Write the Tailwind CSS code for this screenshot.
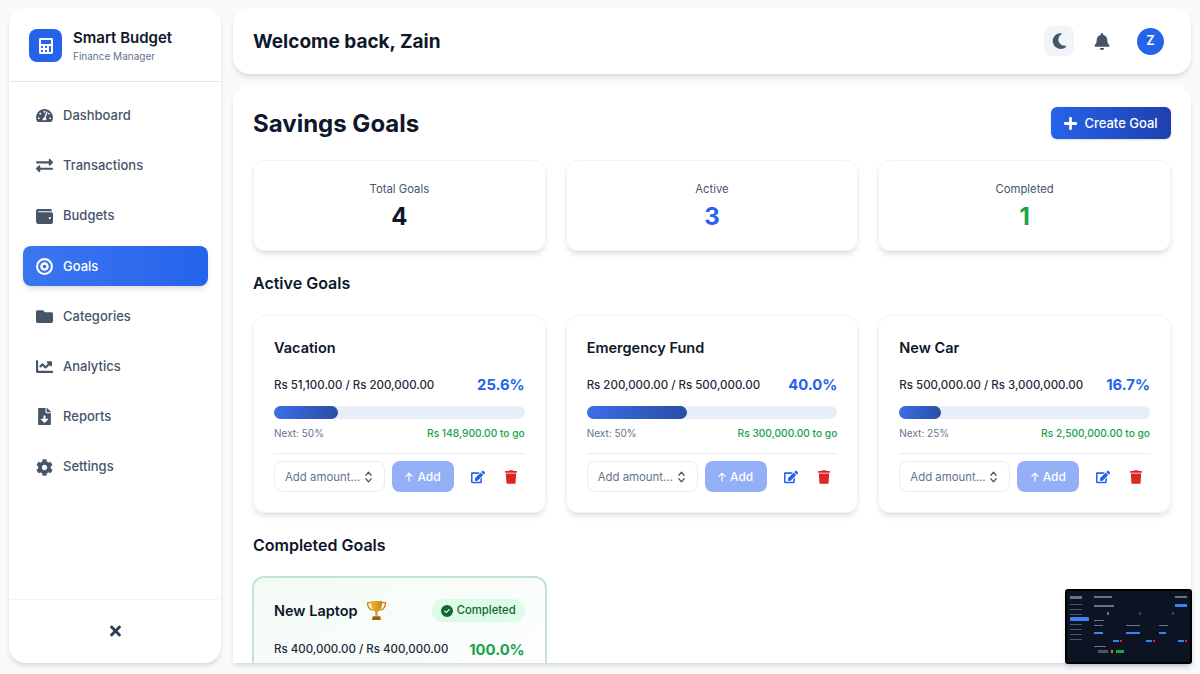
<!DOCTYPE html>
<html lang="en">
    <head>
        <meta charset="UTF-8" />
        <meta name="viewport" content="width=device-width, initial-scale=1.0" />
        <title>Smart Budget</title>
        <script src="https://cdn.jsdelivr.net/npm/@tailwindcss/browser@4"></script>
    </head>

    <body class="relative h-[674px] overflow-hidden bg-[#f8fafc] font-['Inter',sans-serif] text-[#0f172a]">
        <svg class="hidden">
            <symbol id="i-arrow-up" viewBox="0 0 384 512"><path d="M214.6 41.4c-12.5-12.5-32.8-12.5-45.3 0l-160 160c-12.5 12.5-12.5 32.8 0 45.3s32.8 12.5 45.3 0L160 141.2V448c0 17.7 14.3 32 32 32s32-14.3 32-32V141.2L329.4 246.6c12.5 12.5 32.8 12.5 45.3 0s12.5-32.8 0-45.3l-160-160z" /></symbol>
            <symbol id="i-edit" viewBox="0 0 576 512"><path d="M402.6 83.2l90.2 90.2c3.8 3.8 3.8 10 0 13.8L274.4 405.6l-92.8 10.3c-12.4 1.4-22.9-9.1-21.5-21.5l10.3-92.8L388.8 83.2c3.8-3.8 10-3.8 13.8 0zm162-22.9l-48.8-48.8c-15.2-15.2-39.9-15.2-55.2 0l-35.4 35.4c-3.8 3.8-3.8 10 0 13.8l90.2 90.2c3.8 3.8 10 3.8 13.8 0l35.4-35.4c15.2-15.3 15.2-40 0-55.2zM384 346.2V448H64V128h229.8c3.2 0 6.2-1.3 8.5-3.5l40-40c7.6-7.6 2.2-20.5-8.5-20.5H48C21.5 64 0 85.5 0 112v352c0 26.5 21.5 48 48 48h352c26.5 0 48-21.5 48-48V306.2c0-10.7-12.9-16-20.5-8.5l-40 40c-2.2 2.3-3.5 5.3-3.5 8.5z" /></symbol>
            <symbol id="i-trash" viewBox="0 0 448 512"><path d="M432 32H312l-9.4-18.7A24 24 0 0 0 281.1 0H166.8a23.72 23.72 0 0 0-21.4 13.3L136 32H16A16 16 0 0 0 0 48v32a16 16 0 0 0 16 16h416a16 16 0 0 0 16-16V48a16 16 0 0 0-16-16zM53.2 467a48 48 0 0 0 47.9 45h245.8a48 48 0 0 0 47.9-45L416 128H32z" /></symbol>
            <symbol id="i-spin" viewBox="0 0 10 16"><path d="M2 6l3-3.5L8 6M2 10l3 3.5L8 10" fill="none" stroke="currentColor" stroke-width="1.4" stroke-linecap="round" stroke-linejoin="round" /></symbol>
        </svg>

        <div class="flex h-[663px] gap-3 pt-2 pl-[9px] pr-[9px]">
            <!-- sidebar -->
            <aside class="flex h-[655px] w-[212px] shrink-0 flex-col rounded-2xl border border-white bg-white shadow-md">
                <div class="flex h-[73px] items-center gap-[11px] border-b border-[#e2e8f0] pl-[19px] pt-px">
                    <div class="flex h-[33px] w-[33px] items-center justify-center rounded-lg bg-[#2563eb] text-white">
                        <svg class="h-4 w-3.5 fill-current" viewBox="0 0 448 512"><path d="M400 0H48C22.4 0 0 22.4 0 48v416c0 25.6 22.4 48 48 48h352c25.6 0 48-22.4 48-48V48c0-25.6-22.4-48-48-48zM128 435.2c0 6.4-6.4 12.8-12.8 12.8H76.8c-6.4 0-12.8-6.4-12.8-12.8v-38.4c0-6.4 6.4-12.8 12.8-12.8h38.4c6.4 0 12.8 6.4 12.8 12.8v38.4zm0-128c0 6.4-6.4 12.8-12.8 12.8H76.8c-6.4 0-12.8-6.4-12.8-12.8v-38.4c0-6.4 6.4-12.8 12.8-12.8h38.4c6.4 0 12.8 6.4 12.8 12.8v38.4zm128 128c0 6.4-6.4 12.8-12.8 12.8h-38.4c-6.4 0-12.8-6.4-12.8-12.8v-38.4c0-6.4 6.4-12.8 12.8-12.8h38.4c6.4 0 12.8 6.4 12.8 12.8v38.4zm0-128c0 6.4-6.4 12.8-12.8 12.8h-38.4c-6.4 0-12.8-6.4-12.8-12.8v-38.4c0-6.4 6.4-12.8 12.8-12.8h38.4c6.4 0 12.8 6.4 12.8 12.8v38.4zm128 128c0 6.4-6.4 12.8-12.8 12.8h-38.4c-6.4 0-12.8-6.4-12.8-12.8V268.8c0-6.4 6.4-12.8 12.8-12.8h38.4c6.4 0 12.8 6.4 12.8 12.8v166.4zm0-256c0 6.4-6.4 12.8-12.8 12.8H76.8c-6.4 0-12.8-6.4-12.8-12.8V76.8C64 70.4 70.4 64 76.8 64h294.4c6.4 0 12.8 6.4 12.8 12.8v102.4z" /></svg>
                    </div>
                    <div>
                        <div class="text-[15px] leading-5 font-semibold">Smart Budget</div>
                        <div class="mt-px text-[10px] leading-[14px] text-[#64748b]">Finance Manager</div>
                    </div>
                </div>

                <nav class="flex flex-1 flex-col gap-[10.2px] pt-[13.8px] pr-3 pl-[13px] text-[13px] font-medium text-[#475569]">
                    <a class="flex h-10 items-center gap-[10px] pl-[13px]">
                        <svg class="h-[15px] w-[17px] fill-current" viewBox="0 0 576 512"><path d="M288 32C128.94 32 0 160.94 0 320c0 52.8 14.25 102.26 39.06 144.8 5.61 9.62 16.3 15.2 27.44 15.2h443c11.14 0 21.83-5.58 27.44-15.2C561.75 422.26 576 372.8 576 320c0-159.06-128.94-288-288-288zm0 64c14.71 0 26.58 10.13 30.32 23.65-1.11 2.26-2.64 4.23-3.45 6.67l-9.22 27.67c-5.13 3.49-10.97 6.01-17.64 6.01-17.67 0-32-14.33-32-32S270.33 96 288 96zM96 384c-17.67 0-32-14.33-32-32s14.33-32 32-32 32 14.33 32 32-14.33 32-32 32zm48-160c-17.67 0-32-14.33-32-32s14.33-32 32-32 32 14.33 32 32-14.33 32-32 32zm246.77-72.41l-61.33 184C343.13 347.33 352 364.54 352 384c0 11.72-3.38 22.55-8.88 32H232.88c-5.5-9.45-8.88-20.28-8.88-32 0-33.94 26.5-61.43 59.9-63.59l61.34-184.01c4.17-12.56 17.73-19.45 30.36-15.17 12.57 4.19 19.35 17.79 15.17 30.36zm14.66 57.2l15.52-46.55c3.47-1.29 7.13-2.23 11.05-2.23 17.67 0 32 14.33 32 32s-14.33 32-32 32c-11.38-.01-20.89-6.28-26.57-15.22zM480 384c-17.67 0-32-14.33-32-32s14.33-32 32-32 32 14.33 32 32-14.33 32-32 32z" /></svg>
                        Dashboard
                    </a>
                    <a class="flex h-10 items-center gap-[10px] pl-[13px]">
                        <svg class="h-[17px] w-[17px] fill-current" viewBox="0 0 512 512"><path d="M0 168v-16c0-13.255 10.745-24 24-24h360V80c0-21.367 25.899-32.042 40.971-16.971l80 80c9.372 9.373 9.372 24.569 0 33.941l-80 80C409.956 272.982 384 262.456 384 240v-48H24c-13.255 0-24-10.745-24-24zm488 152H128v-48c0-21.314-25.862-32.08-40.971-16.971l-80 80c-9.372 9.373-9.372 24.569 0 33.941l80 80C102.057 463.997 128 453.437 128 432v-48h360c13.255 0 24-10.745 24-24v-16c0-13.255-10.745-24-24-24z" /></svg>
                        Transactions
                    </a>
                    <a class="flex h-10 items-center gap-[10px] pl-[13px]">
                        <svg class="h-[17px] w-[17px] fill-current" viewBox="0 0 512 512"><path d="M461.2 128H80c-8.84 0-16-7.16-16-16s7.16-16 16-16h384c8.84 0 16-7.16 16-16 0-26.51-21.49-48-48-48H64C28.65 32 0 60.65 0 96v320c0 35.35 28.65 64 64 64h397.2c28.02 0 50.8-21.53 50.8-48V176c0-26.47-22.78-48-50.8-48zM416 336c-17.67 0-32-14.33-32-32s14.33-32 32-32 32 14.33 32 32-14.33 32-32 32z" /></svg>
                        Budgets
                    </a>
                    <a class="flex h-10 items-center gap-[10px] rounded-lg bg-linear-to-r from-[#3b76f0] to-[#2563eb] pl-[13px] text-white shadow-md">
                        <svg class="h-[17px] w-[17px] fill-current" viewBox="0 0 512 512"><path fill-rule="evenodd" d="M256 0a256 256 0 1 1 0 512A256 256 0 1 1 256 0zm0 64a192 192 0 1 0 0 384 192 192 0 1 0 0-384zm0 64a128 128 0 1 1 0 256 128 128 0 1 1 0-256zm0 72a56 56 0 1 0 0 112 56 56 0 1 0 0-112z" /></svg>
                        Goals
                    </a>
                    <a class="flex h-10 items-center gap-[10px] pl-[13px]">
                        <svg class="h-[17px] w-[17px] fill-current" viewBox="0 0 512 512"><path d="M464 128H272l-64-64H48C21.49 64 0 85.49 0 112v288c0 26.51 21.49 48 48 48h416c26.51 0 48-21.49 48-48V176c0-26.51-21.49-48-48-48z" /></svg>
                        Categories
                    </a>
                    <a class="flex h-10 items-center gap-[10px] pl-[13px]">
                        <svg class="h-[17px] w-[17px] fill-current" viewBox="0 0 512 512"><path d="M496 384H64V80c0-8.84-7.16-16-16-16H16C7.16 64 0 71.16 0 80v336c0 17.67 14.33 32 32 32h464c8.84 0 16-7.16 16-16v-32c0-8.84-7.16-16-16-16zM464 96H345.94c-21.38 0-32.09 25.85-16.97 40.97l32.4 32.4L288 242.75l-73.37-73.37c-12.5-12.5-32.76-12.5-45.25 0l-68.69 68.69c-6.25 6.25-6.25 16.38 0 22.63l22.62 22.62c6.25 6.25 16.38 6.25 22.63 0L192 237.25l73.37 73.37c12.5 12.5 32.76 12.5 45.25 0l96-96 32.4 32.4c15.12 15.12 40.97 4.41 40.97-16.97V112c.01-8.84-7.15-16-15.99-16z" /></svg>
                        Analytics
                    </a>
                    <a class="flex h-10 items-center gap-[10px] pl-[13px]">
                        <svg class="h-[17px] w-[17px] fill-current" viewBox="0 0 384 512"><path d="M224 136V0H24C10.7 0 0 10.7 0 24v464c0 13.3 10.7 24 24 24h336c13.3 0 24-10.7 24-24V160H248c-13.2 0-24-10.8-24-24zm76.45 211.36l-96.42 95.7c-6.65 6.61-17.39 6.61-24.04 0l-96.42-95.7C73.42 337.29 80.54 320 94.82 320H160v-80c0-8.84 7.16-16 16-16h32c8.84 0 16 7.16 16 16v80h65.18c14.28 0 21.4 17.29 11.27 27.36zM377 105L279.1 7c-4.5-4.5-10.6-7-17-7H256v128h128v-6.1c0-6.3-2.5-12.4-7-16.9z" /></svg>
                        Reports
                    </a>
                    <a class="flex h-10 items-center gap-[10px] pl-[13px]">
                        <svg class="h-[17px] w-[17px] fill-current" viewBox="0 0 512 512"><path d="M487.4 315.7l-42.6-24.6c4.3-23.2 4.3-47 0-70.2l42.6-24.6c4.9-2.8 7.1-8.6 5.5-14-11.1-35.6-30-67.8-54.7-94.6-3.8-4.1-10-5.1-14.8-2.3L380.8 110c-17.9-15.4-38.5-27.3-60.8-35.1V25.8c0-5.6-3.9-10.5-9.4-11.7-36.7-8.2-74.3-7.8-109.2 0-5.5 1.2-9.4 6.1-9.4 11.7V75c-22.2 7.9-42.8 19.8-60.8 35.1L88.7 85.5c-4.9-2.8-11-1.9-14.8 2.3-24.7 26.7-43.6 58.9-54.7 94.6-1.7 5.4.6 11.2 5.5 14L67.3 221c-4.3 23.2-4.3 47 0 70.2l-42.6 24.6c-4.9 2.8-7.1 8.6-5.5 14 11.1 35.6 30 67.8 54.7 94.6 3.8 4.1 10 5.1 14.8 2.3l42.6-24.6c17.9 15.4 38.5 27.3 60.8 35.1v49.2c0 5.6 3.9 10.5 9.4 11.7 36.7 8.2 74.3 7.8 109.2 0 5.5-1.2 9.4-6.1 9.4-11.7v-49.2c22.2-7.9 42.8-19.8 60.8-35.1l42.6 24.6c4.9 2.8 11 1.9 14.8-2.3 24.7-26.7 43.6-58.9 54.7-94.6 1.5-5.5-.7-11.3-5.6-14.1zM256 336c-44.1 0-80-35.9-80-80s35.9-80 80-80 80 35.9 80 80-35.9 80-80 80z" /></svg>
                        Settings
                    </a>
                </nav>

                <div class="flex h-[63px] items-center justify-center border-t border-[#f1f5f9] text-[#334155]">
                    <svg class="h-4 w-[11px] fill-current" viewBox="0 0 352 512"><path d="M242.72 256l100.07-100.07c12.28-12.28 12.28-32.19 0-44.48l-22.24-22.24c-12.28-12.28-32.19-12.28-44.48 0L176 189.28 75.93 89.21c-12.28-12.28-32.19-12.28-44.48 0L9.21 111.45c-12.28 12.28-12.28 32.19 0 44.48L109.28 256 9.21 356.07c-12.28 12.28-12.28 32.19 0 44.48l22.24 22.24c12.28 12.28 32.2 12.28 44.48 0L176 322.72l100.07 100.07c12.28 12.28 32.2 12.28 44.48 0l22.24-22.24c12.28-12.28 12.28-32.19 0-44.48L242.72 256z" /></svg>
                </div>
            </aside>

            <div class="flex min-w-0 flex-1 flex-col gap-3">
                <!-- header -->
                <header class="flex h-[66px] shrink-0 items-center justify-between rounded-2xl border border-white bg-white pr-[26px] pl-[19px] shadow-md">
                    <h1 class="pt-0.5 text-[19px] font-bold">Welcome back, Zain</h1>
                    <div class="flex items-center text-[#475569]">
                        <button class="flex h-[30px] w-[30px] items-center justify-center rounded-lg bg-[#f1f5f9]">
                            <svg class="h-[18px] w-[15px] fill-current" viewBox="0 0 384 512"><path d="M223.5 32C100 32 0 132.3 0 256S100 480 223.5 480c60.6 0 115.5-24.2 155.8-63.4c5-4.9 6.3-12.5 3.1-18.7s-10.1-9.7-17-8.5c-9.8 1.7-19.8 2.6-30.1 2.6c-96.9 0-175.5-78.8-175.5-176c0-65.8 36-123.1 89.3-153.3c6.1-3.5 9.2-10.5 7.7-17.3s-7.3-11.9-14.3-12.5c-6.3-.5-12.6-.8-19-.8z" /></svg>
                        </button>
                        <svg class="ml-5 h-[17px] w-[16px] fill-current" viewBox="0 0 448 512"><path d="M224 0c-17.7 0-32 14.3-32 32V51.2C119 66 64 130.6 64 208v18.8c0 47-17.3 92.4-48.5 127.6l-7.4 8.3c-8.4 9.4-10.4 22.9-5.3 34.4S19.4 416 32 416H416c12.6 0 24-7.4 29.2-18.9s3.1-25-5.3-34.4l-7.4-8.3C401.3 319.2 384 273.9 384 226.8V208c0-77.4-55-142-128-156.8V32c0-17.7-14.3-32-32-32zm45.3 493.3c12-12 18.7-28.3 18.7-45.3H224 160c0 17 6.7 33.3 18.7 45.3s28.3 18.7 45.3 18.7s33.3-6.7 45.3-18.7z" /></svg>
                        <div class="ml-[27px] flex h-[27px] w-[27px] items-center justify-center rounded-full bg-[#2563eb] text-[13px] font-semibold text-white">Z</div>
                    </div>
                </header>

                <!-- main -->
                <main class="min-h-0 flex-1 overflow-hidden rounded-t-2xl border border-b-0 border-white bg-white px-[19px] pt-5 shadow-md">
                    <div class="flex h-8 items-center justify-between">
                        <h2 class="pt-0.5 text-[24px] font-bold">Savings Goals</h2>
                        <button class="flex h-8 w-[120px] items-center justify-center gap-[7px] rounded-md bg-linear-to-r from-[#2563eb] to-[#1e40af] pt-px text-[13px] font-medium text-white shadow-sm">
                            <svg class="h-[15px] w-[13px] fill-current" viewBox="0 0 448 512"><path d="M416 208H272V64c0-17.67-14.33-32-32-32h-32c-17.67 0-32 14.33-32 32v144H32c-17.67 0-32 14.33-32 32v32c0 17.67 14.33 32 32 32h144v144c0 17.67 14.33 32 32 32h32c17.67 0 32-14.33 32-32V304h144c17.67 0 32-14.33 32-32v-32c0-17.67-14.33-32-32-32z" /></svg>
                            Create Goal
                        </button>
                    </div>

                    <div class="mt-[21px] grid grid-cols-3 gap-5">
                        <div class="flex h-[91px] flex-col items-center rounded-xl border border-[#f1f5f9] pt-5 shadow-md">
                            <div class="text-[11.3px] leading-4 text-[#475569]">Total Goals</div>
                            <div class="mt-1.5 text-2xl leading-7 font-bold">4</div>
                        </div>
                        <div class="flex h-[91px] flex-col items-center rounded-xl border border-[#f1f5f9] pt-5 shadow-md">
                            <div class="text-[11.3px] leading-4 text-[#475569]">Active</div>
                            <div class="mt-1.5 text-2xl leading-7 font-bold text-[#2563eb]">3</div>
                        </div>
                        <div class="flex h-[91px] flex-col items-center rounded-xl border border-[#f1f5f9] pt-5 shadow-md">
                            <div class="text-[11.3px] leading-4 text-[#475569]">Completed</div>
                            <div class="mt-1.5 text-2xl leading-7 font-bold text-[#16a34a]">1</div>
                        </div>
                    </div>

                    <h3 class="mt-[19px] mb-[19px] text-[16px] leading-[26px] font-semibold">Active Goals</h3>

                    <div class="grid grid-cols-3 gap-5">
                        <div class="h-[198px] rounded-xl border border-[#f1f5f9] px-5 pt-[22px] shadow-md">
                            <div class="text-[14.5px] leading-5 font-semibold">Vacation</div>
                            <div class="mt-[17px] flex items-center justify-between">
                                <span class="pt-0.5 text-[11.5px] font-medium text-[#1e293b]">Rs 51,100.00 / Rs 200,000.00</span>
                                <span class="text-[14.8px] leading-5 font-bold text-[#2563eb]">25.6%</span>
                            </div>
                            <div class="mt-[11px] h-[13px] rounded-full bg-[#e8eef7]">
                                <div class="h-full rounded-full bg-linear-to-r from-[#3b6ee6] to-[#2a4ea6]" style="width: 25.6%"></div>
                            </div>
                            <div class="mt-2 flex justify-between text-[10px] leading-[13px]">
                                <span class="text-[#64748b]">Next: 50%</span>
                                <span class="text-[10.2px] font-medium text-[#16a34a]">Rs 148,900.00 to go</span>
                            </div>
                            <div class="mt-[13px] flex items-center border-t border-[#e8ecf1] pt-[7px]">
                                <div class="flex h-[31px] w-[111px] items-center justify-between rounded-lg border border-[#e8ecf1] pr-[11px] pl-2.5 text-[11.4px] whitespace-nowrap text-[#64748b]">
                                    <span class="pt-0.5">Add amount...</span>
                                    <svg class="h-3.5 w-[9px] text-[#475569]"><use href="#i-spin" /></svg>
                                </div>
                                <button class="ml-[7px] flex h-[31px] w-[62px] items-center justify-center gap-1 rounded-lg bg-[#93aff5] text-xs font-medium text-white">
                                    <svg class="h-2.5 w-2 fill-current"><use href="#i-arrow-up" /></svg>
                                    Add
                                </button>
                                <svg class="ml-[17px] h-[14px] w-[14px] fill-[#2563eb]"><use href="#i-edit" /></svg>
                                <svg class="ml-[20px] h-[14px] w-[12px] fill-[#dc2626]"><use href="#i-trash" /></svg>
                            </div>
                        </div>

                        <div class="h-[198px] rounded-xl border border-[#f1f5f9] px-5 pt-[22px] shadow-md">
                            <div class="text-[14.5px] leading-5 font-semibold">Emergency Fund</div>
                            <div class="mt-[17px] flex items-center justify-between">
                                <span class="pt-0.5 text-[11.5px] font-medium text-[#1e293b]">Rs 200,000.00 / Rs 500,000.00</span>
                                <span class="text-[14.8px] leading-5 font-bold text-[#2563eb]">40.0%</span>
                            </div>
                            <div class="mt-[11px] h-[13px] rounded-full bg-[#e8eef7]">
                                <div class="h-full rounded-full bg-linear-to-r from-[#3b6ee6] to-[#2a4ea6]" style="width: 40%"></div>
                            </div>
                            <div class="mt-2 flex justify-between text-[10px] leading-[13px]">
                                <span class="text-[#64748b]">Next: 50%</span>
                                <span class="text-[10.2px] font-medium text-[#16a34a]">Rs 300,000.00 to go</span>
                            </div>
                            <div class="mt-[13px] flex items-center border-t border-[#e8ecf1] pt-[7px]">
                                <div class="flex h-[31px] w-[111px] items-center justify-between rounded-lg border border-[#e8ecf1] pr-[11px] pl-2.5 text-[11.4px] whitespace-nowrap text-[#64748b]">
                                    <span class="pt-0.5">Add amount...</span>
                                    <svg class="h-3.5 w-[9px] text-[#475569]"><use href="#i-spin" /></svg>
                                </div>
                                <button class="ml-[7px] flex h-[31px] w-[62px] items-center justify-center gap-1 rounded-lg bg-[#93aff5] text-xs font-medium text-white">
                                    <svg class="h-2.5 w-2 fill-current"><use href="#i-arrow-up" /></svg>
                                    Add
                                </button>
                                <svg class="ml-[17px] h-[14px] w-[14px] fill-[#2563eb]"><use href="#i-edit" /></svg>
                                <svg class="ml-[20px] h-[14px] w-[12px] fill-[#dc2626]"><use href="#i-trash" /></svg>
                            </div>
                        </div>

                        <div class="h-[198px] rounded-xl border border-[#f1f5f9] px-5 pt-[22px] shadow-md">
                            <div class="text-[14.5px] leading-5 font-semibold">New Car</div>
                            <div class="mt-[17px] flex items-center justify-between">
                                <span class="pt-0.5 text-[11.5px] font-medium text-[#1e293b]">Rs 500,000.00 / Rs 3,000,000.00</span>
                                <span class="text-[14.8px] leading-5 font-bold text-[#2563eb]">16.7%</span>
                            </div>
                            <div class="mt-[11px] h-[13px] rounded-full bg-[#e8eef7]">
                                <div class="h-full rounded-full bg-linear-to-r from-[#3b6ee6] to-[#2a4ea6]" style="width: 16.7%"></div>
                            </div>
                            <div class="mt-2 flex justify-between text-[10px] leading-[13px]">
                                <span class="text-[#64748b]">Next: 25%</span>
                                <span class="text-[10.2px] font-medium text-[#16a34a]">Rs 2,500,000.00 to go</span>
                            </div>
                            <div class="mt-[13px] flex items-center border-t border-[#e8ecf1] pt-[7px]">
                                <div class="flex h-[31px] w-[111px] items-center justify-between rounded-lg border border-[#e8ecf1] pr-[11px] pl-2.5 text-[11.4px] whitespace-nowrap text-[#64748b]">
                                    <span class="pt-0.5">Add amount...</span>
                                    <svg class="h-3.5 w-[9px] text-[#475569]"><use href="#i-spin" /></svg>
                                </div>
                                <button class="ml-[7px] flex h-[31px] w-[62px] items-center justify-center gap-1 rounded-lg bg-[#93aff5] text-xs font-medium text-white">
                                    <svg class="h-2.5 w-2 fill-current"><use href="#i-arrow-up" /></svg>
                                    Add
                                </button>
                                <svg class="ml-[17px] h-[14px] w-[14px] fill-[#2563eb]"><use href="#i-edit" /></svg>
                                <svg class="ml-[20px] h-[14px] w-[12px] fill-[#dc2626]"><use href="#i-trash" /></svg>
                            </div>
                        </div>
                    </div>

                    <h3 class="mt-[19px] mb-[18px] text-[16px] leading-[26px] font-semibold">Completed Goals</h3>

                    <div class="grid grid-cols-3 gap-5">
                        <div class="-mx-px h-[198px] rounded-xl border-2 border-[#c4e4d2] bg-linear-to-br from-[#f3fbf6] to-white px-5 pt-[21px]">
                            <div class="flex items-center justify-between">
                                <div class="flex items-center gap-2 text-[14.5px] leading-5 font-semibold">
                                    New Laptop
                                    <svg class="h-[21px] w-[21px]" viewBox="0 0 20 20">
                                        <defs>
                                            <linearGradient id="gold" x1="0" y1="0" x2="1" y2="0">
                                                <stop offset="0" stop-color="#f0b93a" />
                                                <stop offset="1" stop-color="#c98312" />
                                            </linearGradient>
                                        </defs>
                                        <path d="M5 2.5H1.5c0 4 1.5 6.5 5 7M15 2.5h3.5c0 4-1.5 6.5-5 7" fill="none" stroke="#c98a1b" stroke-width="1.3" />
                                        <path d="M4.5 1h11c0 5.500-1.500 9-4.300 10.200v3.800H8.800v-3.800C6 10 4.500 6.500 4.500 1z" fill="url(#gold)" />
                                        <path d="M6.500 15.500h7l.8 3.500H5.700z" fill="#9a5f10" />
                                    </svg>
                                </div>
                                <div class="flex h-[23px] items-center gap-1 rounded-full bg-[#dcfce7] px-[9px] text-[11.3px] font-medium text-[#166534]">
                                    <svg class="h-3 w-3 fill-current" viewBox="0 0 512 512"><path d="M256 512A256 256 0 1 0 256 0a256 256 0 1 0 0 512zM369 209L241 337c-9.4 9.4-24.6 9.4-33.9 0l-64-64c-9.4-9.4-9.4-24.6 0-33.9s24.6-9.4 33.9 0l47 47L335 175c9.4-9.4 24.6-9.4 33.9 0s9.4 24.6 0 33.9z" /></svg>
                                    Completed
                                </div>
                            </div>
                            <div class="mt-[18px] flex items-center justify-between">
                                <span class="text-[11.5px] font-medium text-[#1e293b]">Rs 400,000.00 / Rs 400,000.00</span>
                                <span class="text-[14.8px] leading-5 font-bold text-[#16a34a]">100.0%</span>
                            </div>
                        </div>
                    </div>
                </main>
            </div>
        </div>

        <!-- dark mode preview thumbnail -->
        <div class="absolute top-[589px] left-[1065px] h-[75px] w-[127px] overflow-hidden rounded-[3px] border-2 border-black bg-[#0c1424] shadow-md">
            <div class="flex h-full gap-[3px] px-[3px] blur-[0.5px]">
                <div class="flex w-[19px] flex-col pt-[5px]">
                    <div class="h-[3px] w-3 bg-[#64748b]"></div>
                    <div class="mt-[5px] h-px w-3 bg-[#475569]"></div>
                    <div class="mt-1 h-px w-3 bg-[#475569]"></div>
                    <div class="mt-1 h-px w-3 bg-[#475569]"></div>
                    <div class="mt-[2px] h-1 w-full rounded-[1px] bg-[#3b82f6]"></div>
                    <div class="mt-[3px] h-px w-3 bg-[#475569]"></div>
                    <div class="mt-1 h-px w-3 bg-[#475569]"></div>
                    <div class="mt-1 h-px w-3 bg-[#475569]"></div>
                    <div class="mt-1 h-px w-3 bg-[#475569]"></div>
                </div>
                <div class="flex flex-1 flex-col pt-[5px] pl-[2px]">
                    <div class="flex items-center justify-between">
                        <div class="h-[2px] w-[18px] bg-[#64748b]"></div>
                        <div class="h-[2px] w-3 bg-[#64748b]"></div>
                    </div>
                    <div class="mt-1.5 flex items-center justify-between">
                        <div class="h-[2px] w-5 bg-[#64748b]"></div>
                        <div class="h-[3px] w-3 bg-[#3b82f6]"></div>
                    </div>
                    <div class="mt-[3px] grid h-[7px] grid-cols-3 gap-1">
                        <div class="flex items-center justify-center"><div class="h-[3px] w-[2px] bg-[#64748b]"></div></div>
                        <div class="flex items-center justify-center"><div class="h-[3px] w-[2px] bg-[#334155]"></div></div>
                        <div class="flex items-center justify-center"><div class="h-[3px] w-[2px] bg-[#334155]"></div></div>
                    </div>
                    <div class="mt-[3px] h-px w-[10px] bg-[#64748b]"></div>
                    <div class="mt-1 grid h-[17px] grid-cols-3 gap-1">
                        <div class="flex flex-col justify-between">
                            <div class="h-px w-1/3 bg-[#64748b]"></div>
                            <div class="h-[2px] w-1/3 bg-[#3b82f6]"></div>
                            <div class="flex justify-end gap-px"><div class="h-[2px] w-[6px] bg-[#3b82f6]"></div><div class="h-[2px] w-[2px] bg-[#dc2626]"></div></div>
                        </div>
                        <div class="flex flex-col justify-between">
                            <div class="h-px w-1/2 bg-[#64748b]"></div>
                            <div class="h-[2px] w-1/2 bg-[#3b82f6]"></div>
                            <div class="flex justify-end gap-px"><div class="h-[2px] w-[6px] bg-[#3b82f6]"></div><div class="h-[2px] w-[2px] bg-[#dc2626]"></div></div>
                        </div>
                        <div class="flex flex-col justify-between">
                            <div class="h-px w-1/3 bg-[#64748b]"></div>
                            <div class="h-[2px] w-1/4 bg-[#3b82f6]"></div>
                            <div class="flex justify-end gap-px"><div class="h-[2px] w-[6px] bg-[#3b82f6]"></div><div class="h-[2px] w-[2px] bg-[#dc2626]"></div></div>
                        </div>
                    </div>
                    <div class="mt-1 h-px w-[12px] bg-[#64748b]"></div>
                    <div class="mt-[3px] ml-1 flex h-[3px] w-[26px] gap-[3px]"><div class="h-full w-[10px] bg-[#475569]"></div><div class="h-full w-[2px] bg-[#ca8a04]"></div><div class="h-full w-2 bg-[#16a34a]"></div></div>
                </div>
            </div>
        </div>
    </body>
</html>
